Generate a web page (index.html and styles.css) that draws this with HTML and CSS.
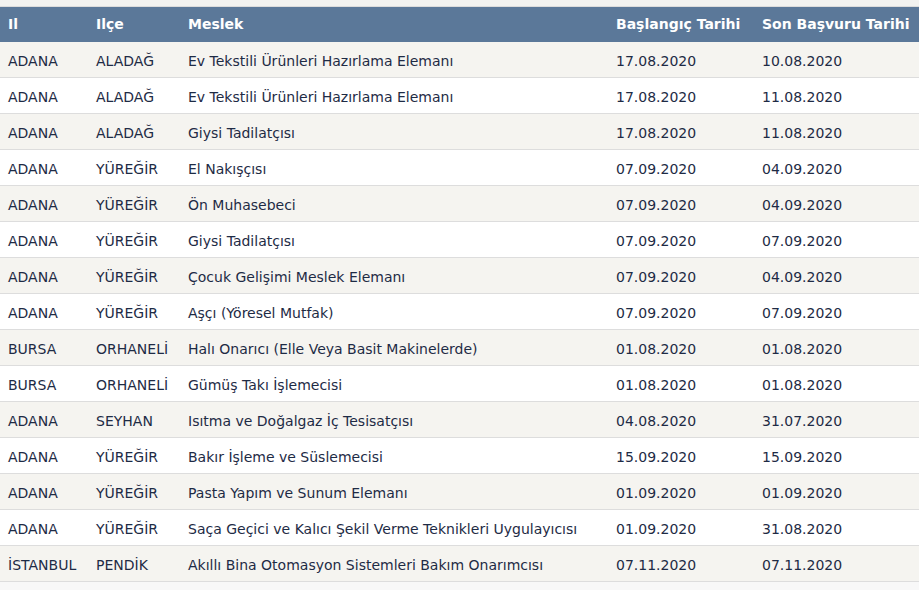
FILE: index.html
```html
<!DOCTYPE html>
<html lang="tr">
<head>
<meta charset="utf-8">
<link rel="stylesheet" href="styles.css">
</head>
<body>
<div class="page">
<div class="topline"></div>
<table class="grid">
<colgroup>
<col class="c1"><col class="c2"><col class="c3"><col class="c4"><col class="c5">
</colgroup>
<thead>
<tr><th>Il</th><th>Ilçe</th><th>Meslek</th><th>Başlangıç Tarihi</th><th>Son Başvuru Tarihi</th></tr>
</thead>
<tbody>
<tr><td>ADANA</td><td>ALADAĞ</td><td>Ev Tekstili Ürünleri Hazırlama Elemanı</td><td>17.08.2020</td><td>10.08.2020</td></tr>
<tr><td>ADANA</td><td>ALADAĞ</td><td>Ev Tekstili Ürünleri Hazırlama Elemanı</td><td>17.08.2020</td><td>11.08.2020</td></tr>
<tr><td>ADANA</td><td>ALADAĞ</td><td>Giysi Tadilatçısı</td><td>17.08.2020</td><td>11.08.2020</td></tr>
<tr><td>ADANA</td><td>YÜREĞİR</td><td>El Nakışçısı</td><td>07.09.2020</td><td>04.09.2020</td></tr>
<tr><td>ADANA</td><td>YÜREĞİR</td><td>Ön Muhasebeci</td><td>07.09.2020</td><td>04.09.2020</td></tr>
<tr><td>ADANA</td><td>YÜREĞİR</td><td>Giysi Tadilatçısı</td><td>07.09.2020</td><td>07.09.2020</td></tr>
<tr><td>ADANA</td><td>YÜREĞİR</td><td>Çocuk Gelişimi Meslek Elemanı</td><td>07.09.2020</td><td>04.09.2020</td></tr>
<tr><td>ADANA</td><td>YÜREĞİR</td><td>Aşçı (Yöresel Mutfak)</td><td>07.09.2020</td><td>07.09.2020</td></tr>
<tr><td>BURSA</td><td>ORHANELİ</td><td>Halı Onarıcı (Elle Veya Basit Makinelerde)</td><td>01.08.2020</td><td>01.08.2020</td></tr>
<tr><td>BURSA</td><td>ORHANELİ</td><td>Gümüş Takı İşlemecisi</td><td>01.08.2020</td><td>01.08.2020</td></tr>
<tr><td>ADANA</td><td>SEYHAN</td><td>Isıtma ve Doğalgaz İç Tesisatçısı</td><td>04.08.2020</td><td>31.07.2020</td></tr>
<tr><td>ADANA</td><td>YÜREĞİR</td><td>Bakır İşleme ve Süslemecisi</td><td>15.09.2020</td><td>15.09.2020</td></tr>
<tr><td>ADANA</td><td>YÜREĞİR</td><td>Pasta Yapım ve Sunum Elemanı</td><td>01.09.2020</td><td>01.09.2020</td></tr>
<tr><td>ADANA</td><td>YÜREĞİR</td><td>Saça Geçici ve Kalıcı Şekil Verme Teknikleri Uygulayıcısı</td><td>01.09.2020</td><td>31.08.2020</td></tr>
<tr><td>İSTANBUL</td><td>PENDİK</td><td>Akıllı Bina Otomasyon Sistemleri Bakım Onarımcısı</td><td>07.11.2020</td><td>07.11.2020</td></tr>
</tbody>
</table>
</div>
</body>
</html>
```
FILE: styles.css
```css
html, body {
  margin: 0;
  padding: 0;
}
body {
  background: #f8f8f8;
  font-family: "DejaVu Sans", Verdana, sans-serif;
  font-size: 14px;
}
.page {
  padding-top: 6px;
  width: 919px;
  height: 590px;
  overflow: hidden;
  background:
    linear-gradient(#f2f2f0, #f2f2f0) top / 100% 6px no-repeat,
    #f8f8f8;
}
.topline {
  height: 1px;
  background: #dcdcdc;
}
.grid {
  width: 919px;
  border-collapse: collapse;
  border-spacing: 0;
  table-layout: fixed;
}
.c1 { width: 88px; }
.c2 { width: 92px; }
.c3 { width: 428px; }
.c4 { width: 146px; }
.c5 { width: 165px; }
.grid th {
  background: #5b7899;
  color: #ffffff;
  font-weight: bold;
  text-align: left;
  height: 35px;
  line-height: 17px;
  padding: 0 0 0 8px;
  white-space: nowrap;
  vertical-align: middle;
}
.grid td {
  color: #1e2b45;
  height: 31px;
  line-height: 17px;
  padding: 4px 0 0 8px;
  border-bottom: 1px solid #dddddd;
  white-space: nowrap;
  vertical-align: middle;
}
.grid tbody tr:nth-child(odd) td { background: #f5f4f0; }
.grid tbody tr:nth-child(even) td { background: #ffffff; }
```
